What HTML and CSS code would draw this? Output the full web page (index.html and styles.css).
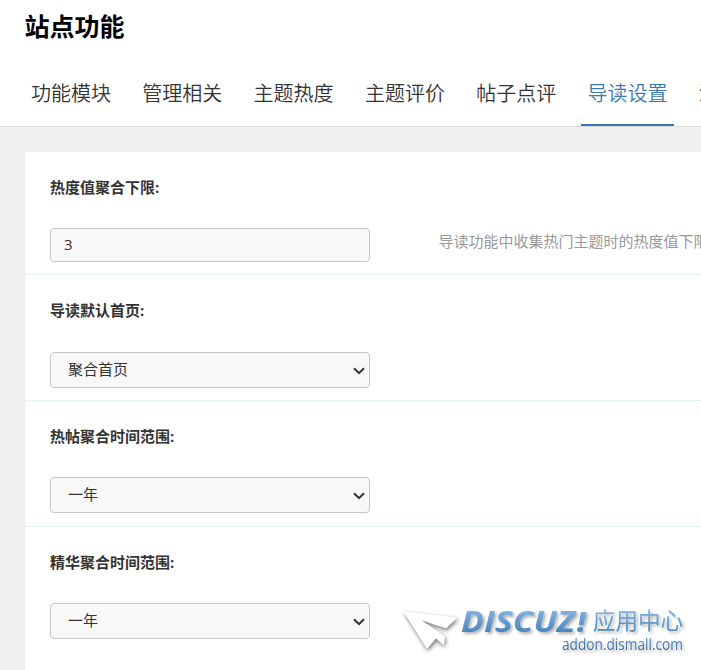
FILE: index.html
```
<!DOCTYPE html>
<html lang="zh-CN">
<head>
<meta charset="utf-8">
<title>站点功能</title>
<link rel="stylesheet" href="styles.css">
</head>
<body>
<header class="header">
  <h1 class="title">站点功能</h1>
  <nav class="tabs">
    <a class="tab">功能模块</a>
    <a class="tab">管理相关</a>
    <a class="tab">主题热度</a>
    <a class="tab">主题评价</a>
    <a class="tab">帖子点评</a>
    <a class="tab active">导读设置</a>
    <a class="tab">淘帖设置</a>
  </nav>
</header>
<main class="panel">
  <section class="row first">
    <h2 class="label">热度值聚合下限:</h2>
    <div class="field">
      <div class="control input">3</div>
      <p class="hint">导读功能中收集热门主题时的热度值下限</p>
    </div>
  </section>
  <section class="row">
    <h2 class="label">导读默认首页:</h2>
    <div class="control select">聚合首页<svg class="arrow" viewBox="0 0 12 8"><path d="M1 1.2 6 6.2 11 1.2"/></svg></div>
  </section>
  <section class="row range">
    <h2 class="label">热帖聚合时间范围:</h2>
    <div class="control select">一年<svg class="arrow" viewBox="0 0 12 8"><path d="M1 1.2 6 6.2 11 1.2"/></svg></div>
  </section>
  <section class="row range">
    <h2 class="label">精华聚合时间范围:</h2>
    <div class="control select">一年<svg class="arrow" viewBox="0 0 12 8"><path d="M1 1.2 6 6.2 11 1.2"/></svg></div>
  </section>
</main>
<svg class="watermark" viewBox="400 600 301 70">
  <defs>
    <linearGradient id="brand" gradientUnits="userSpaceOnUse" x1="0" y1="610" x2="0" y2="633">
      <stop offset="0" stop-color="#83b3e3"/><stop offset="1" stop-color="#4683bd"/>
    </linearGradient>
    <linearGradient id="site" gradientUnits="userSpaceOnUse" x1="0" y1="638" x2="0" y2="652">
      <stop offset="0" stop-color="#5b8fc2"/><stop offset="1" stop-color="#3568a0"/>
    </linearGradient>
  </defs>
  <path class="plane" d="M403.500 611.500 457.500 617.500 446 628.500 422 620.500 445 636.500 444 645.500 436 638.500 427 649Z"/>
  <g class="brand">
    <text class="name" x="461" y="632" textLength="114" lengthAdjust="spacingAndGlyphs">DISCUZ</text>
    <text class="bang" x="577" y="632">!</text>
    <text class="center" x="593" y="629" textLength="90" lengthAdjust="spacingAndGlyphs">应用中心</text>
    <text class="site" x="562" y="650" textLength="121" lengthAdjust="spacingAndGlyphs">addon.dismall.com</text>
  </g>
</svg>
</body>
</html>
```
FILE: styles.css
```
* { box-sizing: border-box; }
body {
  margin: 0;
  height: 670px;
  overflow: hidden;
  background: #efefef;
  color: #333;
  font: 15px/20px "Open Sans", "Noto Sans CJK SC", sans-serif;
}
.header {
  height: 127px;
  overflow: hidden;
  background: #fff;
  border-bottom: 1px solid #d8dcdc;
}
.title {
  margin: 0;
  padding: 8px 0 0 24.5px;
  height: 61px;
  color: #000;
  font-size: 25px;
  line-height: 36px;
}
.tabs {
  display: flex;
  gap: 18.3px;
  padding-left: 25px;
}
.tab {
  flex: none;
  width: 93px;
  height: 65px;
  padding-right: 1px;
  font-size: 20px;
  font-weight: 350;
  line-height: 66px;
  text-align: center;
}
.active {
  color: #3a78b4;
  border-bottom: 2px solid #3a74b4;
}
.panel {
  width: 700px;
  height: 518px;
  margin: 25px 0 0 25px;
  background: #fff;
}
.row {
  height: 126px;
  padding: 25px 0 0 25px;
  border-bottom: 1px dotted #d9e4e4;
}
.row:last-child { border-bottom: 0; }
.first { height: 123px; }
.label {
  margin: 0 0 31px;
  font-size: 15px;
  font-weight: 700;
  line-height: 21px;
}
.first .label,
.range .label { margin-bottom: 30px; }
.field {
  display: flex;
  gap: 68.5px;
}
.control {
  display: flex;
  flex: none;
  align-items: center;
  width: 320px;
  border: 1px solid #c6c6c6;
  border-radius: 4px;
  background: #f8f8f8;
}
.input {
  height: 34px;
  padding: 0 0 2px 13px;
}
.select {
  justify-content: space-between;
  height: 36px;
  padding: 0 4px 2px 17px;
}
.arrow {
  width: 12px;
  height: 8px;
  margin-top: 3px;
  fill: none;
  stroke: #333;
  stroke-width: 2;
}
.hint {
  margin: 3px 0 0;
  color: #999;
  white-space: nowrap;
}
.watermark {
  position: fixed;
  right: 0;
  bottom: 0;
  width: 301px;
  height: 70px;
}
.plane {
  fill: #fff;
  filter: drop-shadow(1px 2px 2px rgba(0, 0, 0, .55));
}
.brand {
  fill: url(#brand);
  filter: drop-shadow(2px 2px 1.5px rgba(0, 0, 0, .3));
}
.name, .bang {
  font-family: "Open Sans", sans-serif;
  font-style: italic;
  font-weight: 700;
  font-size: 28px;
}
.bang { font-weight: 800; }
.center {
  font-family: "Noto Sans CJK SC", sans-serif;
  font-size: 23px;
}
.site {
  fill: url(#site);
  font-family: "Open Sans", sans-serif;
  font-size: 15.5px;
}
```
